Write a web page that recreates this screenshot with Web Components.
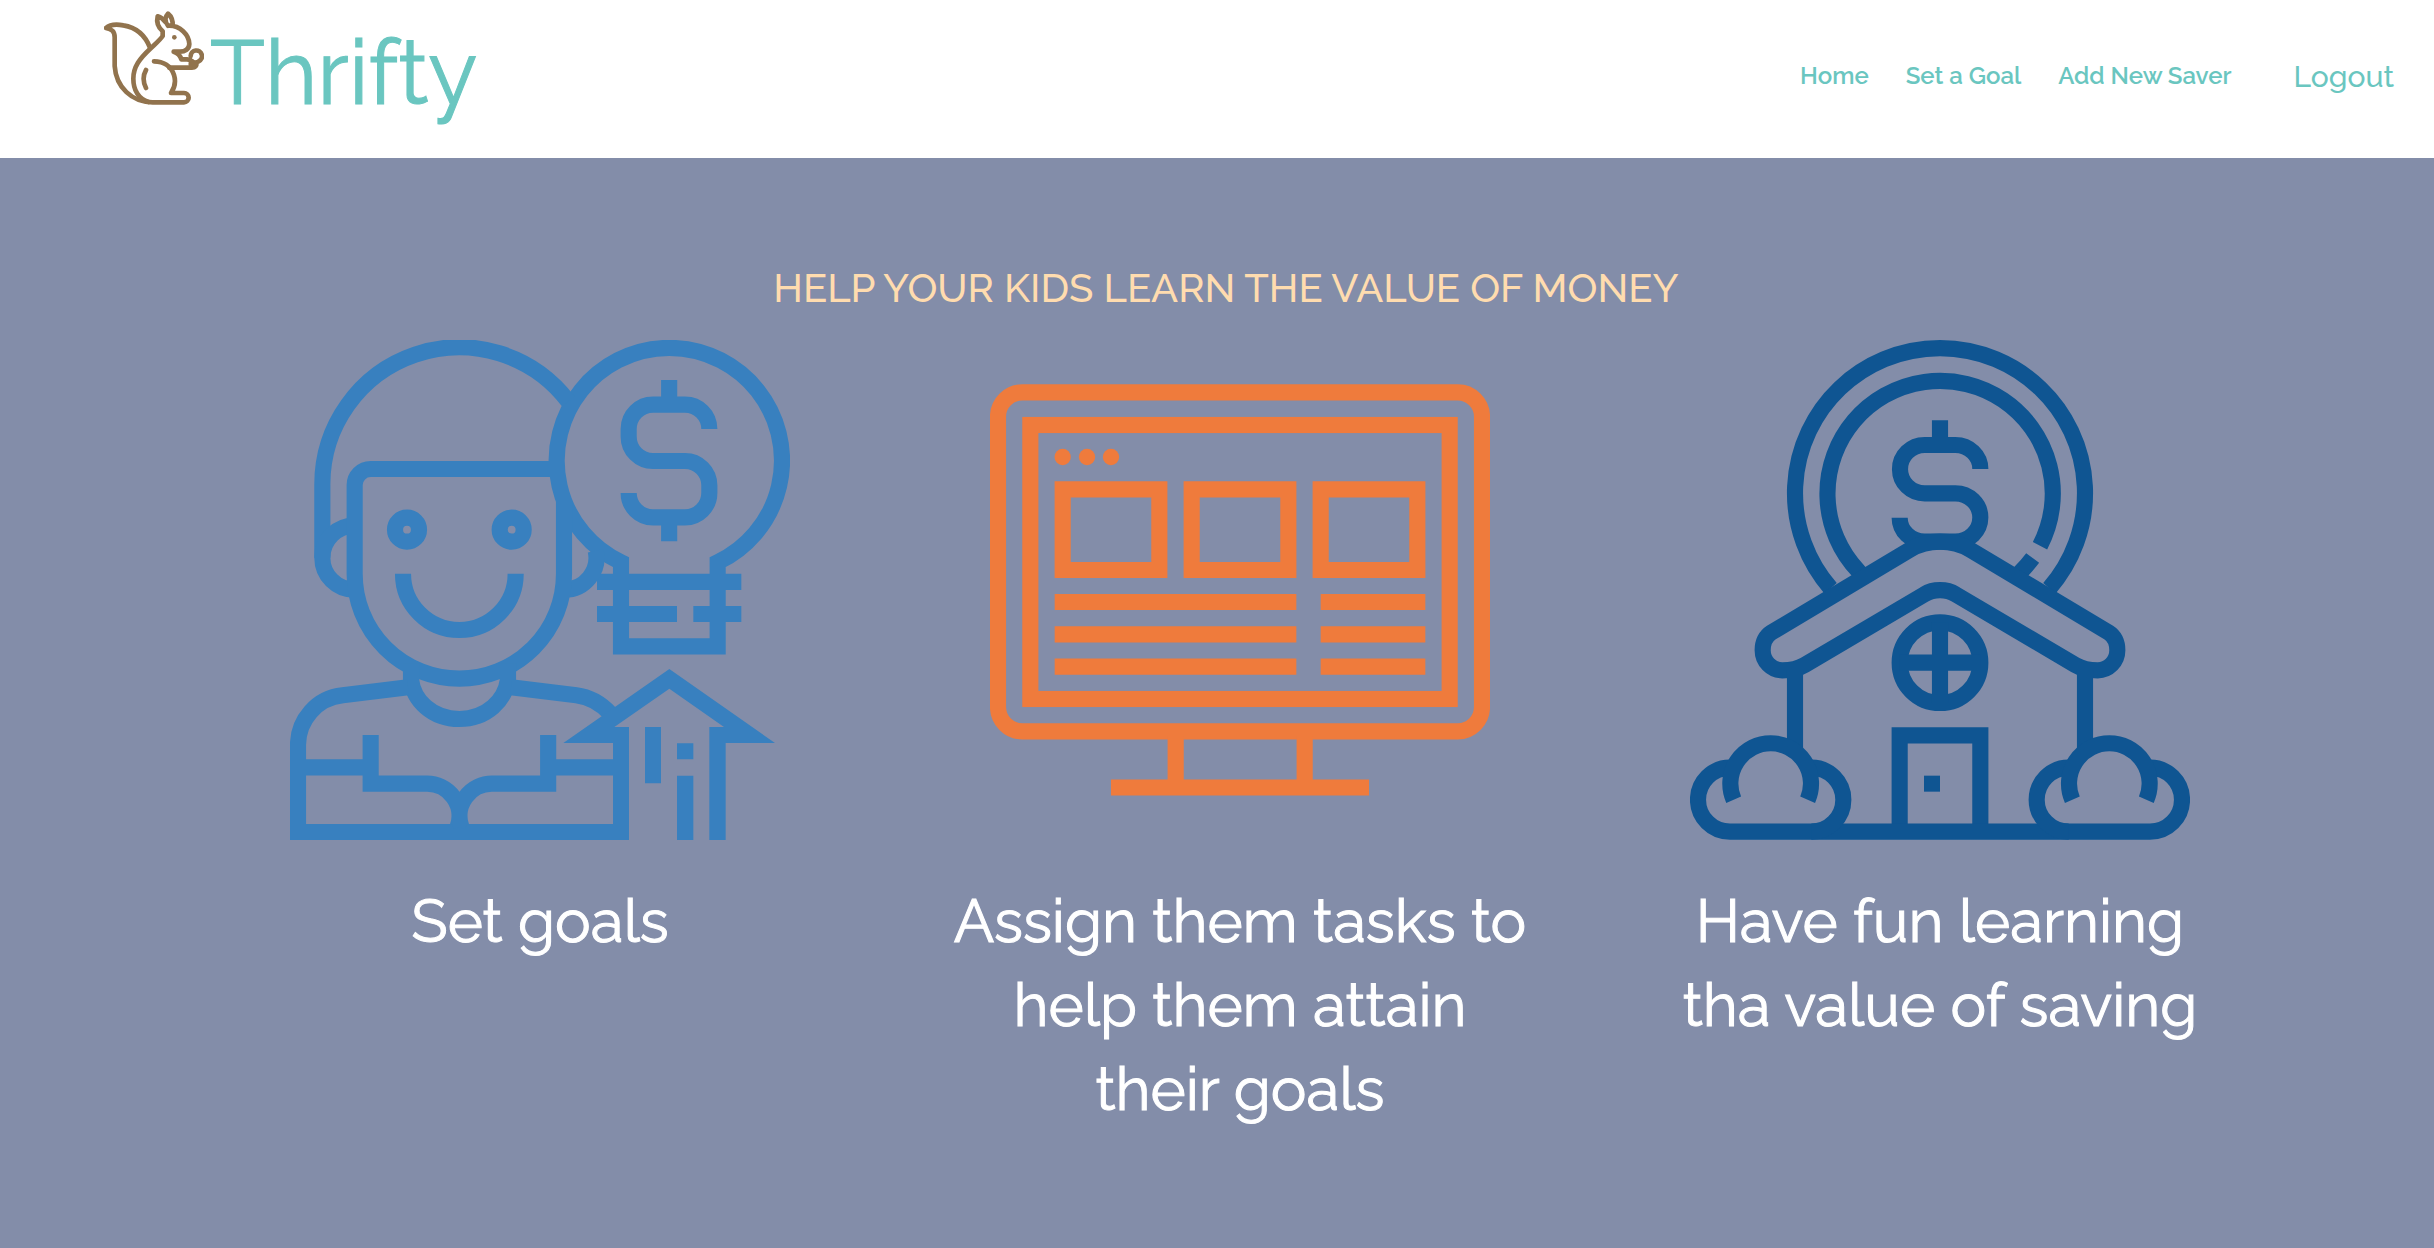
<!DOCTYPE html>
<html lang="en">
<head>
<meta charset="utf-8">
<meta name="viewport" content="width=device-width, initial-scale=1">
<title>Thrifty</title>
<style>
  body { margin: 0; background: #838da9; font-family: Raleway, Lato, sans-serif; font-weight: 500; }
</style>
</head>
<body>
<thrifty-app></thrifty-app>

<template id="app-tpl">
  <style>
    :host { display: flex; flex-direction: column; min-height: 100vh; --teal: #6ac6c0; }
  </style>
  <thrifty-header>
    <thrifty-logo slot="logo">Thrifty</thrifty-logo>
    <nav-link href="#home">Home</nav-link>
    <nav-link href="#goal">Set a Goal</nav-link>
    <nav-link href="#saver">Add New Saver</nav-link>
    <logout-button slot="action">Logout</logout-button>
  </thrifty-header>
  <thrifty-intro>
    <span slot="title">HELP YOUR KIDS LEARN THE VALUE OF MONEY</span>
    <feature-card>
      <icon-goals slot="icon"></icon-goals>
      Set goals
    </feature-card>
    <feature-card>
      <icon-tasks slot="icon"></icon-tasks>
      Assign them tasks to<br>help them attain<br>their goals
    </feature-card>
    <feature-card>
      <icon-savings slot="icon"></icon-savings>
      Have fun learning<br>tha value of saving
    </feature-card>
  </thrifty-intro>
</template>

<template id="header-tpl">
  <style>
    :host { display: block; background: #fff; }
    header { display: flex; justify-content: space-between; align-items: flex-start; height: 158px; padding: 0 40px 0 104px; box-sizing: border-box; }
    .right { display: flex; align-items: flex-start; gap: 62px; padding-top: 52px; }
    nav { display: flex; gap: 37px; }
  </style>
  <header>
    <slot name="logo"></slot>
    <div class="right"><nav aria-label="Main"><slot></slot></nav><slot name="action"></slot></div>
  </header>
</template>

<template id="logo-tpl">
  <style>
    :host { display: block; }
    a { display: flex; align-items: flex-start; gap: 6px; padding-top: 8px; color: var(--teal); text-decoration: none; font-size: 90px; font-weight: 400; line-height: 128px; -webkit-text-stroke: 1px var(--teal); }
    svg { width: 100px; height: 100px; flex: none; }
  </style>
  <a href="#home">
    <svg viewBox="42 24 300 300" fill="none" stroke="#91734d" stroke-width="14" stroke-linecap="round" stroke-linejoin="round" aria-hidden="true">
      <path d="M180 143C166 107 138 82 100 76C78 72 60 73 48 84C66 88 74 94 74 112V198C78 262 126 307 188 307H282A14 14 0 0 0 282 279H243C256 260 258 244 252 225C243 198 220 184 192 184"/>
      <path d="M176 306C146 298 130 270 130 236C130 200 150 175 180 147C200 128 210 120 218 108V94C204 82 199 66 203 49C214 52 220 57 226 66M234 77C223 64 225 50 234 41C245 50 249 62 248 78M236 77C270 76 297 104 298 132C297 148 285 155 270 155H251C264 159 271 167 274 178H292L308 184"/>
      <path d="M302 168A17 17 0 1 1 326 184M300 178C302 186 310 190 320 187C320 197 316 203 306 203H238M302 192H312M168 210C159 226 159 246 168 264"/>
      <circle cx="253" cy="112" r="7" fill="#91734d" stroke="none"/>
    </svg>
    <span><slot></slot></span>
  </a>
</template>

<template id="link-tpl">
  <style>
    :host { display: block; }
    a { display: block; color: var(--teal); text-decoration: none; font-size: 24px; font-weight: 600; line-height: 48px; }
  </style>
  <a><slot></slot></a>
</template>

<template id="logout-tpl">
  <style>
    :host { display: block; }
    button { display: block; border: 0; padding: 0; background: none; color: var(--teal); font: inherit; font-size: 30px; line-height: 50px; cursor: pointer; }
  </style>
  <button type="button"><slot></slot></button>
</template>

<template id="intro-tpl">
  <style>
    :host { display: block; flex: 1; background: #838da9; padding: 102px 0 40px; }
    h1 { margin: 0 0 24px; padding-left: 18px; text-align: center; color: #ffdcaf; font-size: 40px; line-height: 56px; font-weight: 500; }
    .grid { display: grid; grid-template-columns: repeat(3, 1fr); padding: 0 144px 0 190px; }
    section { display: flex; flex-direction: column; }
  </style>
  <section>
    <h1><slot name="title"></slot></h1>
    <div class="grid"><slot></slot></div>
  </section>
</template>

<template id="card-tpl">
  <style>
    :host { display: flex; flex-direction: column; align-items: center; gap: 39px; }
    p { margin: 0; color: #fff; text-align: center; font-size: 60px; font-weight: 400; line-height: 84px; white-space: nowrap; -webkit-text-stroke: 1px #fff; }
  </style>
  <slot name="icon"></slot>
  <p><slot></slot></p>
</template>

<template id="goals-tpl">
  <style>
    :host { display: block; width: 500px; }
    svg { display: block; width: 100%; }
  </style>
  <svg viewBox="30 30 1500 1500" fill="none" stroke="#3880bf" stroke-width="48.4" aria-hidden="true">
    <path d="M1023 949V697A338 338 0 1 1 1313 697V949Z"/>
    <path d="M951 755.5H1384M951 852H1191M1240 852H1384"/>
    <path d="M1167.500 150V210M1167.500 575V634M1288 297A73 73 0 0 0 1215 224H1119A73 73 0 0 0 1046 297V320A73 73 0 0 0 1119 393H1215A73 73 0 0 1 1288 466V489A73 73 0 0 1 1215 562H1119A73 73 0 0 1 1046 489"/>
    <path d="M127 683V465A411 411 0 0 1 865 214"/>
    <path d="M223 587A96 96 0 0 0 223 779M947 662A96 96 0 0 1 852 779"/>
    <path d="M825 417H272A48 48 0 0 0 224 465V732A314 314 0 0 0 852 732V513"/>
    <circle cx="381" cy="599" r="36"/><circle cx="695" cy="599" r="36"/>
    <path d="M369 731A169 169 0 0 0 707 731"/>
    <path d="M393 1000V1048C400 1110 455 1167 538 1167S676 1110 684 1048V1000"/>
    <path d="M384 1072L188 1096C110 1104 54 1170 54 1245V1506H1023M693 1072L889 1096C930 1101 960 1118 990 1150"/>
    <path d="M54 1312H272M272 1215V1361H441A97 97 0 0 1 533 1490M1023 1312H805M804.500 1215V1361H636A97 97 0 0 0 544 1490"/>
    <path fill="#3880bf" stroke="none" d="M1168 1017L1485 1239H1337V1530H1288V1191H1332L1168 1076L1003 1191H1047V1530H999V1239H850ZM1095 1191H1143V1360H1095ZM1191 1240H1240V1288H1191ZM1191 1337H1240V1530H1191Z"/>
  </svg>
</template>

<template id="tasks-tpl">
  <style>
    :host { display: block; width: 500px; }
    svg { display: block; width: 100%; }
  </style>
  <svg viewBox="30 -90 1500 1500" fill="none" stroke="#ef7b3c" stroke-width="48.4" aria-hidden="true">
    <rect x="54" y="67" width="1452" height="1017" rx="73"/>
    <rect x="151" y="165" width="1258" height="822"/>
    <path d="M248 358H538V600H248ZM635 358H925V600H635ZM1022 358H1312V600H1022Z"/>
    <path d="M224 696H949M224 793H949M224 890H949M1022 696H1336M1022 793H1336M1022 890H1336"/>
    <path d="M587 1100V1240M974 1100V1240M393 1252.500H1167"/>
    <g fill="#ef7b3c" stroke="none"><circle cx="248" cy="261" r="24.500"/><circle cx="321" cy="261" r="24.500"/><circle cx="393" cy="261" r="24.500"/></g>
  </svg>
</template>

<template id="savings-tpl">
  <style>
    :host { display: block; width: 500px; }
    svg { display: block; width: 100%; }
  </style>
  <svg viewBox="30 30 1500 1500" fill="none" stroke="#0f5592" stroke-width="48.4" aria-hidden="true">
    <path d="M452 775A435 435 0 1 1 1108 775"/>
    <path d="M545 735L535 723A338 338 0 1 1 1080 647M1058 684Q1043 704 1020 728"/>
    <path d="M780 271V330M901 417A75 72 0 0 0 826 345H734A74 72.500 0 0 0 734 490H826A75 72.500 0 0 1 826 635H734A75 72 0 0 1 659 563"/>
    <path d="M780 635C748 635 716 643 690 659L275 907C258 918 248 938 248 961C248 994 274 1021 307 1021C333 1021 352 1018 374 1005L733 793C760 776 800 776 827 793L1186 1005C1208 1018 1227 1021 1253 1021C1286 1021 1312 994 1312 961C1312 938 1302 918 1285 907L870 659C844 643 812 635 780 635Z"/>
    <path d="M345 1020V1262M1215 1020V1262"/>
    <circle cx="780" cy="998" r="121"/>
    <path d="M780 877V1119M659 998H901"/>
    <path d="M659 1506V1216H901V1506"/>
    <path d="M150 1313A96 96 0 0 0 150 1505H1410A96 96 0 0 0 1410 1313"/>
    <path d="M394 1313A96 96 0 0 1 394 1505M1166 1313A96 96 0 0 0 1166 1505"/>
    <path d="M161 1409A121 121 0 1 1 383 1409M1177 1409A121 121 0 1 1 1399 1409"/>
    <rect x="732" y="1337" width="48" height="48" fill="#0f5592" stroke="none"/>
  </svg>
</template>

<script>
  class TemplateElement extends HTMLElement {
    constructor() {
      super();
      const tpl = document.getElementById(this.constructor.template);
      this.attachShadow({ mode: 'open' }).append(tpl.content.cloneNode(true));
    }
  }
  class NavLink extends TemplateElement {
    static template = 'link-tpl';
    connectedCallback() {
      this.shadowRoot.querySelector('a').href = this.getAttribute('href');
    }
  }
  customElements.define('nav-link', NavLink);
  const parts = {
    'thrifty-logo': 'logo-tpl',
    'logout-button': 'logout-tpl',
    'thrifty-header': 'header-tpl',
    'icon-goals': 'goals-tpl',
    'icon-tasks': 'tasks-tpl',
    'icon-savings': 'savings-tpl',
    'feature-card': 'card-tpl',
    'thrifty-intro': 'intro-tpl',
    'thrifty-app': 'app-tpl'
  };
  for (const [name, template] of Object.entries(parts)) {
    customElements.define(name, class extends TemplateElement { static template = template; });
  }
</script>
</body>
</html>
